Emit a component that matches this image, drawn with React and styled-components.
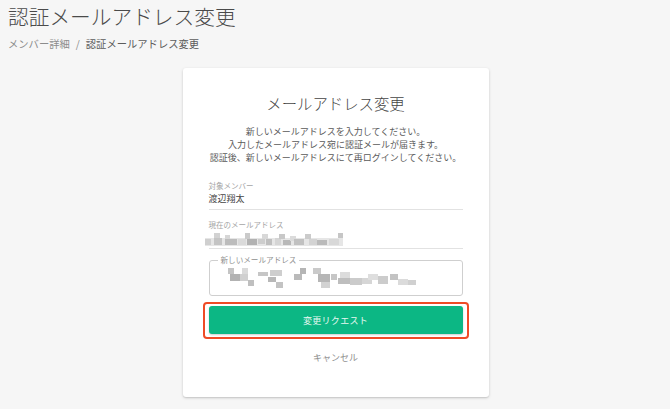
import React from "react";
import styled, { createGlobalStyle } from "styled-components";

const Global = createGlobalStyle`
  html, body { margin: 0; padding: 0; background: #f6f6f6; }
  body { font-family: "Noto Sans CJK JP", "Noto Sans", sans-serif; font-weight: 400; color: #444; }
  * { box-sizing: border-box; }
`;

const Page = styled.div`
  width: 670px;
  height: 409px;
  overflow: hidden;
  display: flex;
  flex-direction: column;
`;

const Header = styled.header`
  padding: 4px 8px 0;
`;

const Title = styled.h1`
  margin: 0;
  font-size: 20.7px;
  line-height: 24px;
  font-weight: 300;
  color: #4a4a4a;
`;

const Crumbs = styled.nav`
  margin-top: 9px;
  font-size: 10.3px;
  line-height: 14px;
  color: #8c8c8c;
  display: flex;
  gap: 6px;
`;

const CrumbCurrent = styled.span`
  color: #5c5c5c;
`;

const Card = styled.section`
  align-self: center;
  margin: 17px 0 0 1px;
  width: 306px;
  background: #fff;
  border-radius: 3px;
  box-shadow: 0 1px 3px rgba(0, 0, 0, 0.18), 0 1px 1px rgba(0, 0, 0, 0.06);
  padding: 24px 26px 32px;
  display: flex;
  flex-direction: column;
`;

const CardTitle = styled.h2`
  margin: 0;
  text-align: center;
  font-size: 15.4px;
  line-height: 22px;
  font-weight: 300;
  color: #444;
`;

const Desc = styled.p`
  margin: 10.5px -10px 0;
  text-align: center;
  font-size: 9px;
  line-height: 13px;
  color: #5a5a5a;
`;

const Field = styled.div`
  margin-top: ${(p) => p.$top}px;
  border-bottom: 1px solid #e2e2e2;
  padding-bottom: ${(p) => p.$pb}px;
`;

const Label = styled.div`
  font-size: 7.5px;
  line-height: 12px;
  color: #a5a5a5;
`;

const Value = styled.div`
  font-size: 9px;
  line-height: 14px;
  color: #444;
`;

const Outlined = styled.fieldset`
  margin: 7px 0 0;
  height: 40px;
  border: 1px solid #cfcfcf;
  border-radius: 3px;
  padding: 0 8px;
`;

const Legend = styled.legend`
  font-size: 7.6px;
  line-height: 8px;
  color: #8f8f8f;
  padding: 0 3px;
  margin-left: 0;
`;

const Highlight = styled.div`
  margin: 6px -6px 0;
  border: 2px solid #ef4b26;
  border-radius: 4px;
  padding: 2px 4px 3px;
`;

const Button = styled.button`
  display: block;
  width: 100%;
  height: 28px;
  border: none;
  border-radius: 3px;
  background: #0cb784;
  color: #e8f8f1;
  font-family: inherit;
  font-weight: 400;
  font-size: 9px;
  letter-spacing: 0.3px;
  box-shadow: 0 1px 2px rgba(0, 0, 0, 0.2);
`;

const Cancel = styled.div`
  margin-top: 12px;
  text-align: center;
  font-size: 9px;
  line-height: 14px;
  color: #8f8f8f;
`;

const MosaicSvg = styled.svg`
  display: block;
`;

function Mosaic({ width, height, blocks, style }) {
  return (
    <MosaicSvg width={width} height={height} viewBox={`0 0 ${width} ${height}`} style={style}>
      {blocks.map(([x, y, w, h, c], i) => (
        <rect key={i} x={x} y={y} width={w} height={h} fill={c} />
      ))}
    </MosaicSvg>
  );
}

const currentBlocks = [
  [0, 7, 138, 8, "#e6e6e6"],
  [0, 8, 6, 6, "#cfcfcf"],
  [9, 2, 6, 5, "#d2d2d2"],
  [9, 7, 8, 7, "#c4c4c4"],
  [20, 4, 5, 4, "#d6d6d6"],
  [20, 8, 12, 6, "#bcbcbc"],
  [33, 8, 8, 6, "#dadada"],
  [40, 2, 5, 6, "#cacaca"],
  [42, 8, 10, 6, "#b2b2b2"],
  [53, 8, 7, 5, "#cdcdcd"],
  [57, 3, 6, 5, "#d8d8d8"],
  [61, 8, 6, 6, "#bfbfbf"],
  [70, 7, 6, 7, "#d5d5d5"],
  [74, 3, 6, 5, "#c8c8c8"],
  [78, 9, 8, 5, "#b8b8b8"],
  [85, 5, 6, 5, "#dbdbdb"],
  [89, 8, 10, 6, "#c1c1c1"],
  [100, 3, 6, 5, "#cbcbcb"],
  [104, 8, 8, 6, "#d3d3d3"],
  [112, 9, 10, 5, "#bababa"],
  [124, 8, 10, 6, "#d8d8d8"],
  [133, 2, 5, 5, "#c6c6c6"],
];

const newBlocks = [
  [10, 8, 6, 6, "#c4c4c4"],
  [12, 14, 10, 7, "#b2b2b2"],
  [24, 8, 6, 6, "#dadada"],
  [22, 14, 8, 7, "#d0d0d0"],
  [30, 20, 6, 6, "#bfbfbf"],
  [40, 12, 10, 4, "#c6c6c6"],
  [52, 10, 12, 6, "#cecece"],
  [50, 17, 8, 5, "#b8b8b8"],
  [58, 22, 7, 6, "#c3c3c3"],
  [76, 14, 8, 6, "#bababa"],
  [82, 8, 6, 6, "#b5b5b5"],
  [95, 8, 8, 6, "#cacaca"],
  [100, 14, 12, 8, "#b6b6b6"],
  [103, 22, 9, 6, "#d2d2d2"],
  [113, 14, 6, 6, "#c6c6c6"],
  [122, 12, 10, 6, "#dcdcdc"],
  [120, 18, 12, 6, "#bebebe"],
  [132, 18, 12, 7, "#cbcbcb"],
  [144, 18, 10, 6, "#d6d6d6"],
  [150, 14, 10, 6, "#dedede"],
  [160, 16, 10, 8, "#cccccc"],
  [172, 14, 8, 6, "#c3c3c3"],
  [180, 19, 10, 6, "#dbdbdb"],
  [190, 20, 8, 5, "#d0d0d0"],
];

export default function App() {
  return (
    <>
      <Global />
      <Page>
        <Header>
          <Title>認証メールアドレス変更</Title>
          <Crumbs>
            <span>メンバー詳細</span>
            <span>/</span>
            <CrumbCurrent>認証メールアドレス変更</CrumbCurrent>
          </Crumbs>
        </Header>
        <Card>
          <CardTitle>メールアドレス変更</CardTitle>
          <Desc>
            新しいメールアドレスを入力してください。
            <br />
            入力したメールアドレス宛に認証メールが届きます。
            <br />
            認証後、新しいメールアドレスにて再ログインしてください。
          </Desc>
          <Field $top={16.5} $pb={3}>
            <Label>対象メンバー</Label>
            <Value>渡辺翔太</Value>
          </Field>
          <Field $top={9} $pb={2}>
            <Label>現在のメールアドレス</Label>
            <Mosaic width={140} height={15} blocks={currentBlocks} style={{ marginLeft: -4 }} />
          </Field>
          <Outlined>
            <Legend>新しいメールアドレス</Legend>
            <Mosaic width={210} height={30} blocks={newBlocks} style={{ marginTop: -4 }} />
          </Outlined>
          <Highlight>
            <Button>変更リクエスト</Button>
          </Highlight>
          <Cancel>キャンセル</Cancel>
        </Card>
      </Page>
    </>
  );
}
